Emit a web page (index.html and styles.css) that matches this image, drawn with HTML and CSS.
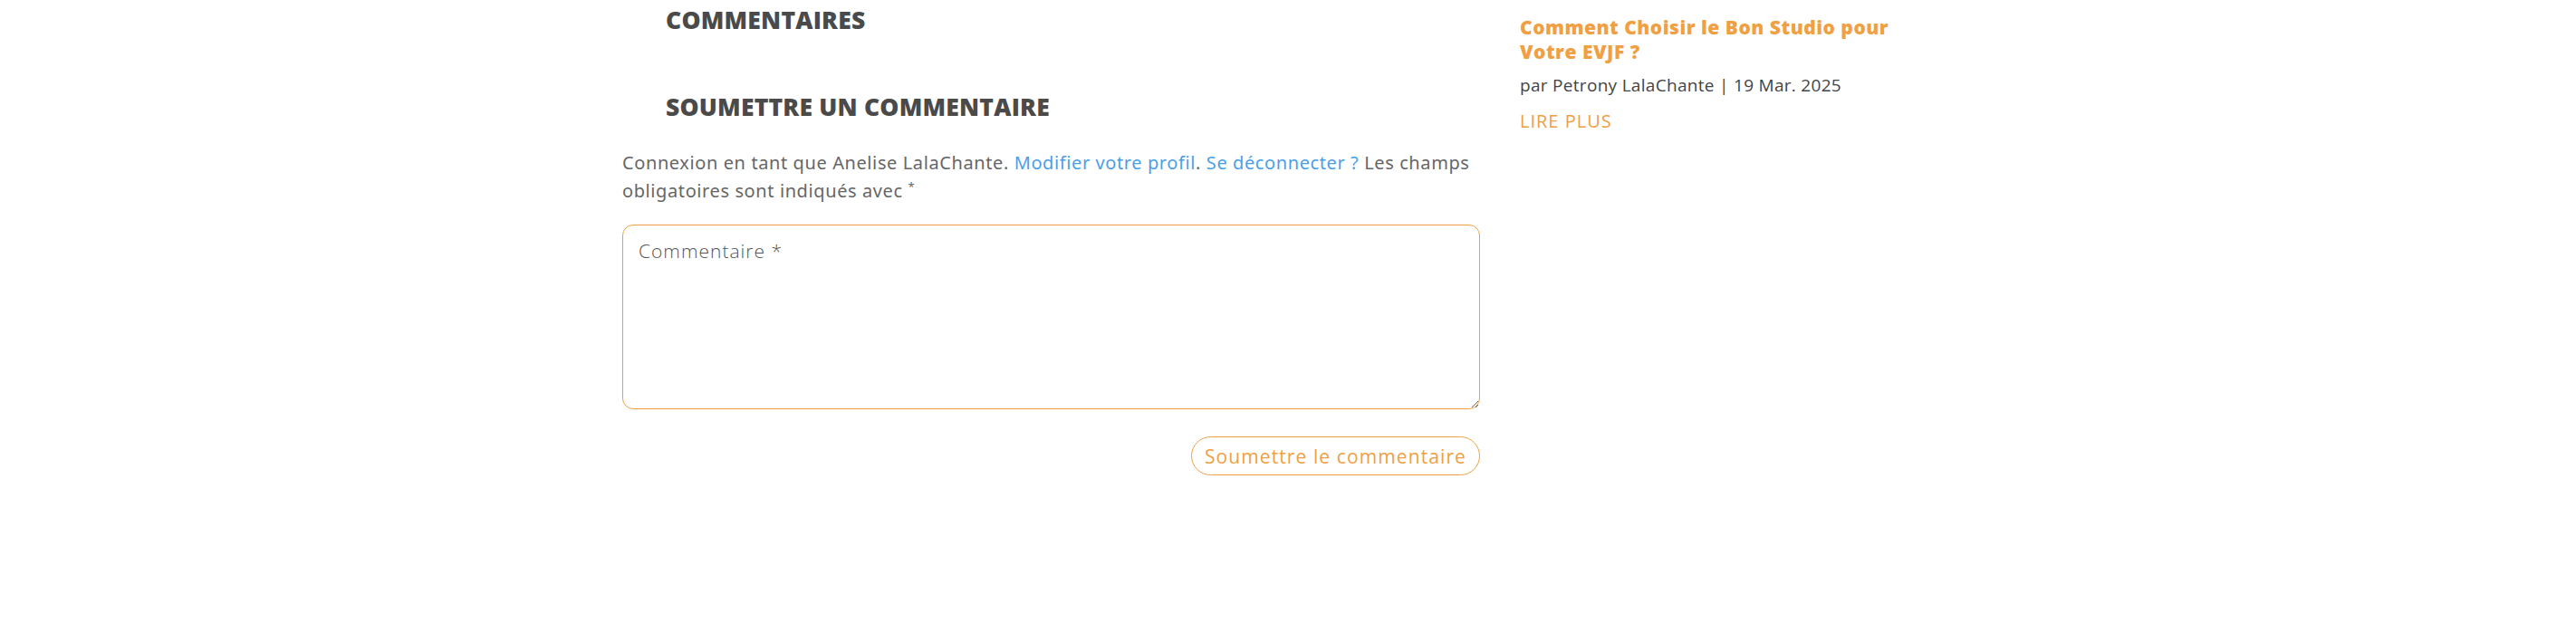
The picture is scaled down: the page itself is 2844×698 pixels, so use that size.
FILE: index.html
```html
<!DOCTYPE html>
<html lang="fr">
<head>
<meta charset="utf-8">
<title>Commentaires</title>
<link rel="stylesheet" href="styles.css">
</head>
<body>
<div class="page">
  <main class="content">
    <h2 class="section-title first">COMMENTAIRES</h2>
    <h2 class="section-title second">SOUMETTRE UN COMMENTAIRE</h2>
    <p class="logged-in">Connexion en tant que Anelise LalaChante. <a href="#">Modifier votre profil</a>. <a href="#">Se déconnecter ?</a> Les champs obligatoires sont indiqués avec <span class="req">*</span></p>
    <form class="comment-form">
      <textarea class="comment-box" placeholder="Commentaire *"></textarea>
      <div class="submit-row">
        <button type="button" class="submit-btn">Soumettre le commentaire</button>
      </div>
    </form>
  </main>
  <aside class="sidebar">
    <article class="post">
      <h3 class="post-title">Comment Choisir le Bon Studio pour Votre EVJF ?</h3>
      <p class="post-meta">par Petrony LalaChante | 19 Mar. 2025</p>
      <a class="read-more" href="#">LIRE PLUS</a>
    </article>
  </aside>
</div>
</body>
</html>
```

FILE: styles.css
```css
* { box-sizing: border-box; }
html, body { margin: 0; padding: 0; background: #fff; }
body { font-family: "Open Sans", "Liberation Sans", sans-serif; color: #666; }

.page {
  display: flex;
  gap: 44px;
  padding-left: 687px;
}

.content {
  width: 947px;
  display: flex;
  flex-direction: column;
}

.section-title {
  font-family: "Open Sans", "Liberation Sans", sans-serif;
  font-weight: 800;
  font-size: 26.5px;
  line-height: 30px;
  color: #4a4a4a;
  margin: 0;
  padding-left: 48px;
  letter-spacing: 0.2px;
}
.section-title.first { margin-top: 7px; }
.section-title.second { margin-top: 66px; }

.logged-in {
  font-family: "Noto Sans", "Liberation Sans", sans-serif;
  font-size: 20px;
  letter-spacing: 0.6px;
  line-height: 30.5px;
  color: #666;
  margin: 32px 0 0;
}
.logged-in a { color: #4b9fe6; text-decoration: none; }
.logged-in .req { font-size: 13px; vertical-align: top; line-height: 20px; }

.comment-form { margin-top: 22px; }

.comment-box {
  display: block;
  width: 947px;
  height: 204px;
  border: 1px solid #f0a043;
  border-radius: 12px;
  padding: 14px 17px;
  font-family: "Open Sans", "Liberation Sans", sans-serif;
  font-weight: 300;
  font-size: 21px;
  letter-spacing: 1px;
  color: #555;
  outline: none;
  resize: vertical;
}
.comment-box::placeholder { color: #555; opacity: 1; }

.submit-row {
  display: flex;
  justify-content: flex-end;
  margin-top: 30px;
}

.submit-btn {
  height: 43px;
  padding: 0 14px;
  border: 1px solid #f0a043;
  border-radius: 22px;
  background: #fff;
  color: #f0a043;
  font-family: "Open Sans", "Liberation Sans", sans-serif;
  font-size: 21px;
  letter-spacing: 1.1px;
  cursor: pointer;
}

.sidebar { width: 430px; }

.post-title {
  font-family: "Open Sans", "Liberation Sans", sans-serif;
  font-weight: 800;
  font-size: 21px;
  letter-spacing: 0.5px;
  line-height: 27px;
  color: #f0a043;
  margin: 17px 0 0;
}
.post-meta {
  font-family: "Open Sans", "Liberation Sans", sans-serif;
  font-size: 19px;
  letter-spacing: 0.3px;
  line-height: 26px;
  color: #444;
  margin: 10px 0 0;
}
.read-more {
  display: block;
  font-family: "Open Sans", "Liberation Sans", sans-serif;
  font-size: 20px;
  letter-spacing: 1px;
  line-height: 26px;
  color: #f0a043;
  text-decoration: none;
  margin-top: 14px;
}
```
